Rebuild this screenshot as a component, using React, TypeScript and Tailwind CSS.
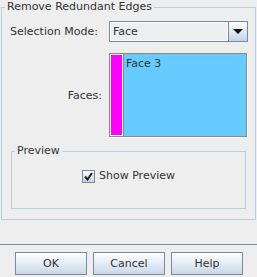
export default function App() {
    return (
        <div className="w-[257px] h-[277px] bg-[#eeeeee] flex flex-col text-[11px] leading-[14px] text-[#333333] font-['DejaVu_Sans',sans-serif]">
            <fieldset className="ml-[1px] w-[255px] h-[220px] border border-[#b8cfe5] p-0 m-0 min-w-0">
                <legend className="ml-[3px] px-[2px] leading-[14px]">Remove Redundant Edges</legend>
                <div className="ml-[8px] mt-[7px] grid grid-cols-[99px_139px] grid-rows-[21px_85px] gap-y-[11px]">
                    <div className="flex items-center">Selection Mode:</div>
                    <div className="flex border border-[#7a8a99]">
                        <div className="flex-1 flex items-center border border-[#f8fbfe] bg-[#eeeeee] pl-[2px]">Face</div>
                        <div className="w-[19px] border-l border-[#7a8a99] bg-gradient-to-b from-white to-[#c3d4e6] flex items-center justify-center">
                            <svg width="10" height="5" viewBox="0 0 10 5">
                                <path d="M0 0 H10 L5 5 Z" fill="#111" />
                            </svg>
                        </div>
                    </div>
                    <div className="flex items-center justify-end pr-[7px]">Faces:</div>
                    <div className="flex border-r border-b border-white">
                        <div className="flex flex-1 border border-[#8a8a8a]">
                            <div className="w-[13px] border border-white bg-[#ff00ff]" />
                            <div className="flex-1 border-l border-[#8a8a8a] bg-[#66ccff] pl-[2px] pt-[3px]">Face 3</div>
                        </div>
                    </div>
                </div>
                <fieldset className="ml-[9px] mt-[6px] w-[235px] h-[65px] border border-[#b8cfe5] p-0 m-0 min-w-0">
                    <legend className="ml-[3px] px-[2px] leading-[14px]">Preview</legend>
                    <div className="flex justify-center items-center pt-[11px] gap-[4px]">
                        <div className="w-[13px] h-[13px] border border-[#7a8a99] bg-gradient-to-b from-white to-[#c3d4e6] flex items-center justify-center">
                            <svg width="9" height="9" viewBox="0 0 9 9">
                                <path d="M1 4.5 L3.5 7.5 L8 1" stroke="#222" strokeWidth="2" fill="none" />
                            </svg>
                        </div>
                        <span>Show Preview</span>
                    </div>
                </fieldset>
            </fieldset>
            <div className="mt-[24px] h-px bg-[#7a8a99]" />
            <div className="mt-[7px] pl-[15px] flex gap-[6px]">
                {["OK", "Cancel", "Help"].map((b) => (
                    <div key={b} className="w-[72px] h-[23px] border border-[#7a8a99] bg-gradient-to-b from-white to-[#c8d8e9] flex items-center justify-center">
                        {b}
                    </div>
                ))}
            </div>
        </div>
    );
}
